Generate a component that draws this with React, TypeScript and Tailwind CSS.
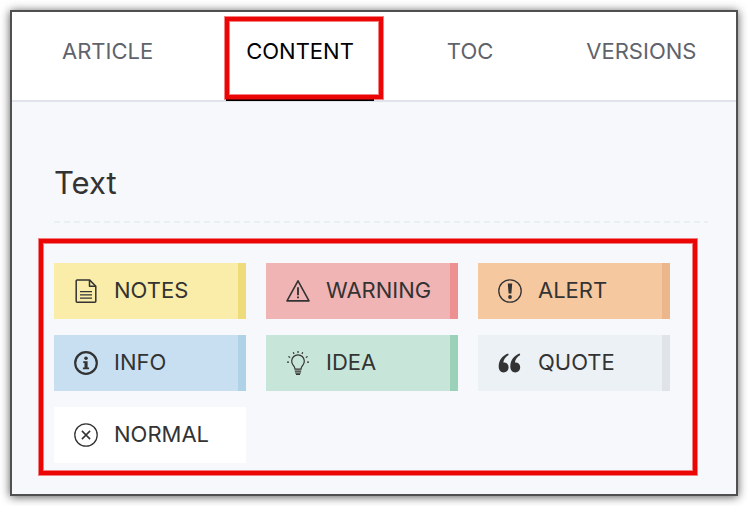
import React from 'react';

const TABS = ['ARTICLE', 'CONTENT', 'TOC', 'VERSIONS'];

const iconProps = {
  viewBox: '0 0 24 24',
  className: 'w-6 h-6 shrink-0',
  fill: 'none',
  stroke: 'currentColor',
  'aria-hidden': true,
};

const NotesIcon = () => (
  <svg {...iconProps} strokeWidth="1.5">
    <path d="M15.5 .9H3.2a1 1 0 0 0-1 1v20.3a1 1 0 0 0 1 1h17.6a1 1 0 0 0 1-1V7.2z" strokeLinejoin="round" />
    <path d="M15.5 .9v6.3h6.3" strokeLinejoin="round" />
    <path d="M6 12.6h12M6 15.9h12M6 19.2h12" strokeWidth="1.3" />
  </svg>
);

const WarningIcon = () => (
  <svg {...iconProps} strokeWidth="1.6">
    <path d="M12 1.8L23 21.9H1z" strokeLinejoin="round" />
    <path d="M12 8.2v8" strokeWidth="1.9" />
    <path d="M12 17.5v1.8" strokeWidth="1.9" />
  </svg>
);

const AlertIcon = () => (
  <svg {...iconProps} strokeWidth="1.3">
    <circle cx="12" cy="12" r="11.2" />
    <path d="M9.8 4.4h4.4l-.8 10.2h-2.8z" fill="currentColor" stroke="none" />
    <circle cx="12" cy="18" r="1.9" fill="currentColor" stroke="none" />
  </svg>
);

const InfoIcon = () => (
  <svg {...iconProps} strokeWidth="2.2">
    <circle cx="12" cy="12" r="10.8" />
    <circle cx="12" cy="7.3" r="1.8" fill="currentColor" stroke="none" />
    <path d="M9.2 10.2h4.4v6.2h1.5v1.8H8.9v-1.8h1.6V12H9.2z" fill="currentColor" stroke="none" />
  </svg>
);

const IdeaIcon = () => (
  <svg {...iconProps} strokeWidth="1.2">
    <path d="M9 18.2c0-2-.9-2.9-1.9-4.1a6.3 6.3 0 1 1 9.8 0c-1 1.2-1.9 2.1-1.9 4.1z" />
    <path d="M8.8 20.2h6.4M9 22h6M10 23.4h4" />
    <path d="M12 0v2M7.2 1.2l.9 1.7M16.8 1.2l-.9 1.7M2.4 5.4l1.8 1M21.6 5.4l-1.8 1M1 11.2h2M21 11.2h2" />
  </svg>
);

const QuoteIcon = () => (
  <svg {...iconProps} fill="currentColor" stroke="none">
    <path d="M10.2 2.5C4.6 4.4.7 9 .7 15.600c0 3.600 2 5.800 4.900 5.800 2.900 0 5-2.200 5-5.100 0-2.800-2-4.800-4.600-4.800-.3 0-.5 0-.7.100.4-3 2.300-5.600 5.300-7.500z" />
    <path d="M21.800 2.500C16.200 4.400 12.300 9 12.300 15.600c0 3.600 2 5.800 4.900 5.800 2.900 0 5-2.200 5-5.100 0-2.800-2-4.800-4.600-4.800-.3 0-.5 0-.7.100.4-3 2.300-5.600 5.300-7.500z" />
  </svg>
);

const NormalIcon = () => (
  <svg {...iconProps} strokeWidth="1.3">
    <circle cx="12" cy="12" r="11.2" />
    <path d="M7.9 7.9l8.2 8.2M16.1 7.9l-8.2 8.2" strokeWidth="1.5" />
  </svg>
);

const BLOCKS = [
  { label: 'NOTES', icon: NotesIcon, color: 'bg-[#faeca9] border-[#eedb79]' },
  { label: 'WARNING', icon: WarningIcon, color: 'bg-[#f1b4b5] border-[#ec9190]' },
  { label: 'ALERT', icon: AlertIcon, color: 'bg-[#f6c8a0] border-[#ebb68b]' },
  { label: 'INFO', icon: InfoIcon, color: 'bg-[#c8dff2] border-[#b0d2e7]' },
  { label: 'IDEA', icon: IdeaIcon, color: 'bg-[#c8e5d9] border-[#9bd1b9]' },
  { label: 'QUOTE', icon: QuoteIcon, color: 'bg-[#ebf1f5] border-[#e0e4e9]' },
  { label: 'NORMAL', icon: NormalIcon, color: 'bg-white border-white' },
];

const Highlight = ({ className }: { className: string }) => (
  <span
    className={`absolute pointer-events-none border-4 border-[#ec0505] shadow-[0_0_0_1px_#ec050580,inset_0_0_0_1px_#ec050580] ${className}`}
  />
);

export default function App() {
  return (
    <div className="min-h-screen flex p-[10px] bg-white font-[Inter,'Liberation_Sans',sans-serif] text-[#333]">
      <div className="flex-1 border-2 border-[#505050] bg-[#f7f8fc] shadow-[0_1px_9px_rgba(0,0,0,0.65)]">
        <nav className="flex gap-[53px] h-[90px] pl-[30px] bg-white border-b-2 border-[#e0e3ea]">
          {TABS.map((tab) => {
            const active = tab === 'CONTENT';
            return (
              <button
                key={tab}
                className={`relative h-[89px] px-5 pb-[10px] text-[22px] leading-7 border-b-2 ${
                  active ? 'text-black border-black' : 'text-[#5f636b] border-transparent'
                }`}
              >
                {tab}
                {active && <Highlight className="-left-px -right-[9px] top-[5px] bottom-0" />}
              </button>
            );
          })}
        </nav>

        <section className="pl-[42px] pr-7 pt-[61px]">
          <h2 className="text-[31px] leading-10 pb-[18px]">Text</h2>
          <div className="h-[2px] bg-[repeating-linear-gradient(90deg,#e9f0f3_0_6px,transparent_6px_10px)]" />
          <div className="relative flex flex-wrap gap-x-5 gap-y-4 pt-10 pb-3">
            {BLOCKS.map(({ label, icon: Icon, color }) => (
              <button
                key={label}
                className={`flex items-center gap-4 w-48 h-14 pl-5 border-r-8 text-[22px] leading-7 ${color}`}
              >
                <Icon />
                <span className="pb-[2px]">{label}</span>
              </button>
            ))}
            <Highlight className="-left-[15px] right-[11px] top-4 bottom-0" />
          </div>
        </section>
      </div>
    </div>
  );
}
